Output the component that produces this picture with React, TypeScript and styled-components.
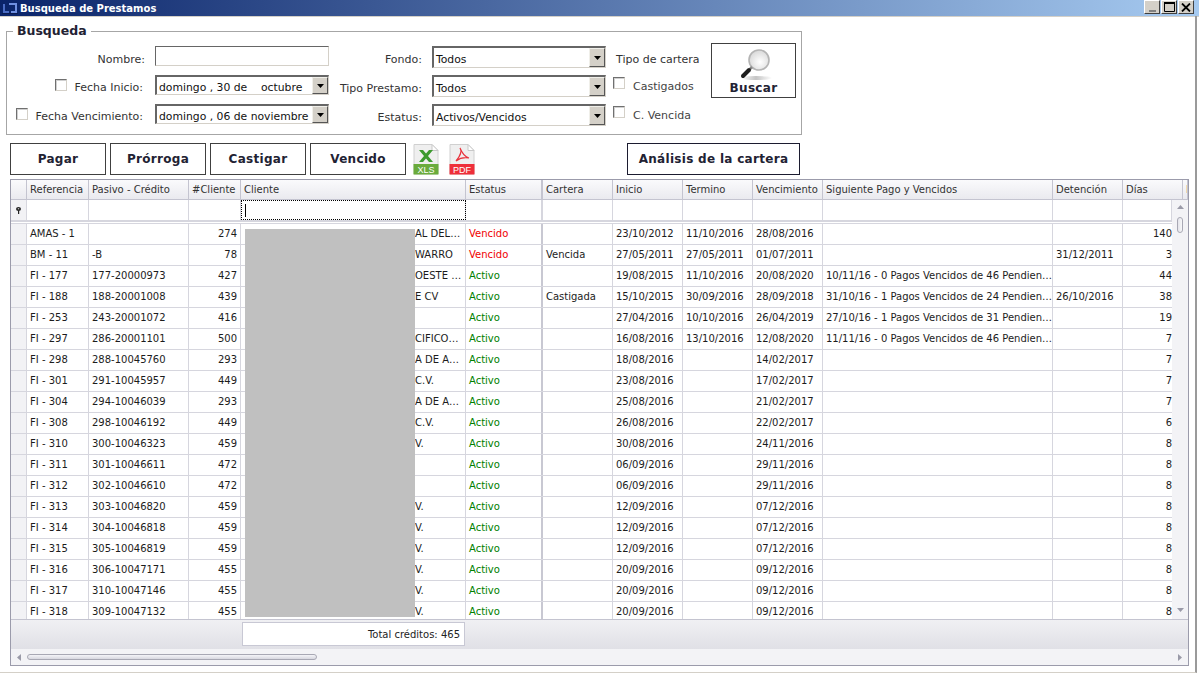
import React from 'react';
import styled, { createGlobalStyle } from 'styled-components';

const HEAD_COLS = '16px 62px 100px 52px 225px 77px 70px 70px 70px 70px 230px 70px 60px 1fr';
const BODY_COLS = '16px 62px 100px 52px 225px 77px 70px 70px 70px 70px 230px 70px 49px';

const headers = [
  '',
  'Referencia',
  'Pasivo - Crédito',
  '#Cliente',
  'Cliente',
  'Estatus',
  'Cartera',
  'Inicio',
  'Termino',
  'Vencimiento',
  'Siguiente Pago y Vencidos',
  'Detención',
  'Días',
  'I',
];

type Row = [string, string, string, string, string, string, string, string, string, string, string, string];

const rows: Row[] = [
  ['AMAS - 1', '', '274', 'AL DEL…', 'Vencido', '', '23/10/2012', '11/10/2016', '28/08/2016', '', '', '140'],
  ['BM - 11', '-B', '78', 'WARRO', 'Vencido', 'Vencida', '27/05/2011', '27/05/2011', '01/07/2011', '', '31/12/2011', '3'],
  ['FI - 177', '177-20000973', '427', 'OESTE …', 'Activo', '', '19/08/2015', '11/10/2016', '20/08/2020', '10/11/16 - 0 Pagos Vencidos de 46 Pendien…', '', '44'],
  ['FI - 188', '188-20001008', '439', 'E CV', 'Activo', 'Castigada', '15/10/2015', '30/09/2016', '28/09/2018', '31/10/16 - 1 Pagos Vencidos de 24 Pendien…', '26/10/2016', '38'],
  ['FI - 253', '243-20001072', '416', '', 'Activo', '', '27/04/2016', '10/10/2016', '26/04/2019', '27/10/16 - 1 Pagos Vencidos de 31 Pendien…', '', '19'],
  ['FI - 297', '286-20001101', '500', 'CIFICO…', 'Activo', '', '16/08/2016', '13/10/2016', '12/08/2020', '11/11/16 - 0 Pagos Vencidos de 46 Pendien…', '', '7'],
  ['FI - 298', '288-10045760', '293', 'A DE A…', 'Activo', '', '18/08/2016', '', '14/02/2017', '', '', '7'],
  ['FI - 301', '291-10045957', '449', 'C.V.', 'Activo', '', '23/08/2016', '', '17/02/2017', '', '', '7'],
  ['FI - 304', '294-10046039', '293', 'A DE A…', 'Activo', '', '25/08/2016', '', '21/02/2017', '', '', '7'],
  ['FI - 308', '298-10046192', '449', 'C.V.', 'Activo', '', '26/08/2016', '', '22/02/2017', '', '', '6'],
  ['FI - 310', '300-10046323', '459', 'V.', 'Activo', '', '30/08/2016', '', '24/11/2016', '', '', '8'],
  ['FI - 311', '301-10046611', '472', '', 'Activo', '', '06/09/2016', '', '29/11/2016', '', '', '8'],
  ['FI - 312', '302-10046610', '472', '', 'Activo', '', '06/09/2016', '', '29/11/2016', '', '', '8'],
  ['FI - 313', '303-10046820', '459', 'V.', 'Activo', '', '12/09/2016', '', '07/12/2016', '', '', '8'],
  ['FI - 314', '304-10046818', '459', 'V.', 'Activo', '', '12/09/2016', '', '07/12/2016', '', '', '8'],
  ['FI - 315', '305-10046819', '459', 'V.', 'Activo', '', '12/09/2016', '', '07/12/2016', '', '', '8'],
  ['FI - 316', '306-10047171', '455', 'V.', 'Activo', '', '20/09/2016', '', '09/12/2016', '', '', '8'],
  ['FI - 317', '310-10047146', '455', 'V.', 'Activo', '', '20/09/2016', '', '09/12/2016', '', '', '8'],
  ['FI - 318', '309-10047132', '455', 'V.', 'Activo', '', '20/09/2016', '', '09/12/2016', '', '', '8'],
];

const ComboArrow: React.FC = () => (
  <svg width="7" height="4" viewBox="0 0 7 4">
    <path d="M0 0h7L3.5 4z" fill="#000" />
  </svg>
);

const Combo: React.FC<{ value: string; tall?: boolean }> = ({ value, tall }) => (
  <ComboBox $tall={tall}>
    <ComboText>{value}</ComboText>
    <ComboButton>
      <ComboArrow />
    </ComboButton>
  </ComboBox>
);

const Check: React.FC<{ label: string }> = ({ label }) => (
  <CheckLabel>
    <CheckBox />
    <span>{label}</span>
  </CheckLabel>
);

const LogoIcon: React.FC = () => (
  <svg width="16" height="13" viewBox="0 0 16 13">
    <path d="M1 2v9h6V9H3V2z" fill="#4a6cc4" />
    <path d="M7 1h8v10H9V9h4V3H7z" fill="#6f90e0" />
    <path d="M0 11h16v1H0z" fill="#0a1a50" />
  </svg>
);

const SearchIcon: React.FC = () => (
  <svg width="50" height="34" viewBox="0 0 50 34">
    <defs>
      <radialGradient id="lens" cx="0.55" cy="0.6" r="0.6">
        <stop offset="0" stopColor="#ffffff" />
        <stop offset="1" stopColor="#d8d8d8" />
      </radialGradient>
      <linearGradient id="shadow" x1="0" x2="1">
        <stop offset="0" stopColor="#ffffff" />
        <stop offset="0.5" stopColor="#c4c4c4" />
        <stop offset="1" stopColor="#ffffff" />
      </linearGradient>
    </defs>
    <ellipse cx="27" cy="31" rx="16" ry="2" fill="url(#shadow)" />
    <circle cx="30" cy="13" r="10" fill="url(#lens)" stroke="#b4b4b4" strokeWidth="1.6" />
    <path d="M23 20l-2 2" stroke="#8a8a8a" strokeWidth="2.5" />
    <path d="M20 23l-6 6" stroke="#1c1c1c" strokeWidth="4" strokeLinecap="round" />
  </svg>
);

const FileIcon: React.FC<{ band: string; label: string; children: React.ReactNode }> = ({ band, label, children }) => (
  <svg width="26" height="31" viewBox="0 0 26 31">
    <path d="M1 0.5h18l6 6v23.5H1z" fill="#efefef" stroke="#d0d0d0" />
    <path d="M19 0.5v6h6z" fill="#fff" stroke="#c8c8c8" />
    <rect x="0.5" y="20" width="25" height="10.5" fill={band} />
    <text x="13" y="28.5" textAnchor="middle" fontFamily="Liberation Sans, sans-serif" fontSize="9" fill="#fff">
      {label}
    </text>
    {children}
  </svg>
);

const PinIcon: React.FC = () => (
  <svg width="5" height="7" viewBox="0 0 5 7">
    <ellipse cx="2.5" cy="2" rx="2.5" ry="2" fill="#222" />
    <circle cx="2.5" cy="1.8" r="0.8" fill="#bbb" />
    <path d="M2 3.5h1.2V7H2z" fill="#222" />
  </svg>
);

const App: React.FC = () => (
  <Window>
    <GlobalStyle />
    <TitleBar>
      <LogoIcon />
      <TitleText>Busqueda de Prestamos</TitleText>
      <WindowButtons>
        <WindowButton>
          <svg width="7" height="2" viewBox="0 0 7 2">
            <path d="M0 0h7v2H0z" fill="#808080" />
          </svg>
        </WindowButton>
        <WindowButton>
          <svg width="11" height="10" viewBox="0 0 11 10">
            <path d="M0.5 1.5h10v8H0.5z" fill="none" stroke="#000" />
            <path d="M0 0h11v2H0z" fill="#000" />
          </svg>
        </WindowButton>
        <WindowButton>
          <svg width="10" height="9" viewBox="0 0 10 9">
            <path d="M1 0.5l8 8M9 0.5l-8 8" stroke="#000" strokeWidth="1.8" />
          </svg>
        </WindowButton>
      </WindowButtons>
    </TitleBar>

    <Content>
      <SearchGroup>
        <SearchLegend>Busqueda</SearchLegend>
        <SearchForm>
          <FieldLabel>Nombre:</FieldLabel>
          <TextInput />
          <FieldLabel>Fondo:</FieldLabel>
          <Combo value="Todos" tall />
          <CarteraTitle>Tipo de cartera</CarteraTitle>
          <SearchButton>
            <SearchIcon />
            Buscar
          </SearchButton>

          <DateLabel>
            <CheckBox />
            <span>Fecha Inicio:</span>
          </DateLabel>
          <Combo value="domingo , 30 de    octubre" />
          <FieldLabel>Tipo Prestamo:</FieldLabel>
          <Combo value="Todos" tall />
          <Check label="Castigados" />

          <DateLabel>
            <CheckBox />
            <span>Fecha Vencimiento:</span>
          </DateLabel>
          <Combo value="domingo , 06 de noviembre" />
          <FieldLabel>Estatus:</FieldLabel>
          <Combo value="Activos/Vencidos" tall />
          <Check label="C. Vencida" />
        </SearchForm>
      </SearchGroup>

      <Toolbar>
        <ActionButton>Pagar</ActionButton>
        <ActionButton>Prórroga</ActionButton>
        <ActionButton>Castigar</ActionButton>
        <ActionButton>Vencido</ActionButton>
        <ExportIcons>
          <FileIcon band="#6aab3c" label="XLS">
            <path d="M6 6h4l3 3.5L16 6h4l-5 6 5 6h-4l-3-3.5L10 18H6l5-6z" fill="#3c9a2e" />
          </FileIcon>
          <FileIcon band="#ee2f3a" label="PDF">
            <path d="M11 4c2 3 1 7-4 13 4-3 8-4 13-3-4-1-7-5-9-10z" fill="none" stroke="#e8323c" strokeWidth="1.2" />
          </FileIcon>
        </ExportIcons>
        <AnalysisButton>Análisis de la cartera</AnalysisButton>
      </Toolbar>

      <GridFrame>
        <HeaderRow>
          {headers.map((title, i) => (
            <HeaderCell key={i} $thick={i === 5}>
              {title}
            </HeaderCell>
          ))}
        </HeaderRow>

        <GridMiddle>
          <Viewport>
            <FilterRow>
              {BODY_COLS.split(' ').map((_, i) => (
                <FilterCell key={i} $indicator={i === 0} $focused={i === 4} $thick={i === 5}>
                  {i === 0 && <PinIcon />}
                  {i === 4 && <Caret />}
                </FilterCell>
              ))}
            </FilterRow>
            <FilterDivider />
            {rows.map((row) => (
              <DataRow key={row[0]}>
                <IndicatorCell />
                <DataCell>{row[0]}</DataCell>
                <DataCell>{row[1]}</DataCell>
                <DataCell $right>{row[2]}</DataCell>
                <ClientCell>{row[3]}</ClientCell>
                <StatusCell $overdue={row[4] === 'Vencido'}>{row[4]}</StatusCell>
                <DataCell>{row[5]}</DataCell>
                <DataCell>{row[6]}</DataCell>
                <DataCell>{row[7]}</DataCell>
                <DataCell>{row[8]}</DataCell>
                <DataCell>{row[9]}</DataCell>
                <DataCell>{row[10]}</DataCell>
                <DaysCell>{row[11]}</DaysCell>
              </DataRow>
            ))}
            <Redaction />
          </Viewport>
          <VScroll>
            <svg width="7" height="4" viewBox="0 0 7 4">
              <path d="M3.5 0L7 4H0z" fill="#9a9aa8" />
            </svg>
            <VThumb />
            <VSpacer />
            <svg width="7" height="4" viewBox="0 0 7 4">
              <path d="M0 0h7L3.5 4z" fill="#9a9aa8" />
            </svg>
          </VScroll>
        </GridMiddle>

        <FooterRow>
          <TotalBox>Total créditos: 465</TotalBox>
        </FooterRow>

        <HScroll>
          <svg width="4" height="7" viewBox="0 0 4 7">
            <path d="M4 0v7L0 3.5z" fill="#9a9aa8" />
          </svg>
          <HThumb />
          <svg width="4" height="7" viewBox="0 0 4 7">
            <path d="M0 0v7l4-3.5z" fill="#9a9aa8" />
          </svg>
        </HScroll>
      </GridFrame>
    </Content>
  </Window>
);

const GlobalStyle = createGlobalStyle`
  html, body {
    margin: 0;
    padding: 0;
    background: #fff;
    overflow: hidden;
  }
`;

const Window = styled.div`
  width: 1199px;
  height: 673px;
  display: flex;
  flex-direction: column;
  font-family: 'DejaVu Sans', sans-serif;
  font-size: 11px;
  color: #222;
`;

const TitleBar = styled.div`
  height: 16px;
  flex: none;
  display: flex;
  align-items: center;
  padding: 0 5px 0 2px;
  background: linear-gradient(90deg, #0a246a 0%, #a6caf0 100%);
  box-shadow: 0 1px 0 #d4d0c8;
`;

const TitleText = styled.span`
  margin-left: 2px;
  color: #fff;
  font-family: 'DejaVu Sans', sans-serif;
  font-weight: bold;
  font-size: 10px;
`;

const WindowButtons = styled.div`
  margin-left: auto;
  display: flex;
  gap: 1px;
  align-self: flex-start;
`;

const WindowButton = styled.div`
  width: 16px;
  height: 14px;
  box-sizing: border-box;
  display: flex;
  align-items: center;
  justify-content: center;
  background: #d4d0c8;
  border: 1px solid;
  border-color: #fff #404040 #404040 #fff;
  &:first-child svg {
    margin-top: 7px;
  }
`;

const Content = styled.div`
  flex: 1;
  width: 1197px;
  box-sizing: border-box;
  padding: 12px 7px 6px 6px;
  border-right: 2px solid #9a9a9a;
  border-bottom: 1px solid #d4d0c8;
  display: flex;
  flex-direction: column;
`;

const SearchGroup = styled.fieldset`
  width: 796px;
  height: 107px;
  box-sizing: border-box;
  margin: 0;
  padding: 0;
  border: 1px solid #a6a6a6;
`;

const SearchLegend = styled.legend`
  margin-left: 6px;
  padding: 0 4px;
  font-weight: bold;
  font-size: 12.5px;
  line-height: 6px;
  color: #222233;
`;

const SearchForm = styled.div`
  display: grid;
  grid-template-columns: 148px 174px 103px 174px 105px 85px;
  grid-template-rows: 29px 29px 29px;
  margin-top: 12px;
  align-items: start;
`;

const FieldLabel = styled.label`
  padding: 7px 10px 0 0;
  text-align: right;
  white-space: nowrap;
  color: #333;
`;

const DateLabel = styled(FieldLabel)`
  display: flex;
  justify-content: flex-end;
  align-items: flex-start;
  gap: 7px;
  padding-right: 12px;
  padding-top: 4px;
  span {
    padding-top: 2px;
  }
`;

const CheckBox = styled.span`
  width: 12px;
  height: 12px;
  box-sizing: border-box;
  display: block;
  flex: none;
  background: #fff;
  border: 1px solid;
  border-color: #707070 #d4d0c8 #d4d0c8 #707070;
  box-shadow: inset 1px 1px 0 #d0d0d0;
`;

const TextInput = styled.div`
  height: 20px;
  box-sizing: border-box;
  background: #fff;
  border: 1px solid;
  border-color: #666 #d4d0c8 #d4d0c8 #666;
`;

const ComboBox = styled.div<{ $tall?: boolean }>`
  height: ${(p) => (p.$tall ? '22px' : '20px')};
  box-sizing: border-box;
  display: flex;
  align-items: center;
  background: #fff;
  border: 1px solid;
  border-color: #666 #d4d0c8 #d4d0c8 #666;
  border-width: 2px 1px 1px 2px;
`;

const ComboText = styled.span`
  flex: 1;
  padding: 3px 0 0 2px;
  font-size: 10.8px;
  white-space: pre;
  overflow: hidden;
  color: #111;
`;

const ComboButton = styled.span`
  width: 16px;
  height: 100%;
  box-sizing: border-box;
  flex: none;
  display: flex;
  align-items: center;
  justify-content: center;
  background: #d4d0c8;
  border: 1px solid;
  border-color: #f0efe9 #555 #555 #f0efe9;
`;

const CarteraTitle = styled.div`
  margin-left: 10px;
  padding-top: 7px;
  color: #333;
`;

const CheckLabel = styled.label`
  margin-left: 7px;
  display: flex;
  align-items: flex-start;
  gap: 8px;
  padding-top: 2px;
  color: #444;
  span:last-child {
    padding-top: 3px;
  }
`;

const SearchButton = styled.div`
  grid-column: 6;
  grid-row: 1 / span 2;
  height: 55px;
  margin-top: -3px;
  box-sizing: border-box;
  display: flex;
  flex-direction: column;
  align-items: center;
  justify-content: flex-end;
  padding-bottom: 2px;
  border: 1px solid #404040;
  background: #fff;
  font-weight: bold;
  font-size: 12px;
  letter-spacing: 0.3px;
  color: #222233;
`;

const Toolbar = styled.div`
  width: 790px;
  margin: 8px 0 4px 4px;
  display: flex;
  align-items: center;
  gap: 4px;
`;

const ActionButton = styled.div`
  width: 96px;
  height: 32px;
  box-sizing: border-box;
  display: flex;
  align-items: center;
  justify-content: center;
  border: 1px solid #404040;
  background: #fff;
  font-weight: bold;
  font-size: 12px;
  letter-spacing: 0.3px;
  color: #222233;
`;

const ExportIcons = styled.div`
  margin-left: 3px;
  display: flex;
  gap: 10px;
`;

const AnalysisButton = styled(ActionButton)`
  width: 173px;
  margin-left: auto;
  border-color: #1c1c30;
`;

const GridFrame = styled.div`
  width: 1179px;
  height: 487px;
  margin-left: 4px;
  box-sizing: border-box;
  border: 1px solid #9b9bab;
  display: flex;
  flex-direction: column;
  font-size: 10px;
  overflow: hidden;
`;

const HeaderRow = styled.div`
  height: 20px;
  flex: none;
  box-sizing: border-box;
  display: grid;
  grid-template-columns: ${HEAD_COLS};
  border-bottom: 1px solid #c4c4d0;
  background: linear-gradient(#fafafc, #eaeaef);
`;

const HeaderCell = styled.div<{ $thick?: boolean }>`
  display: flex;
  align-items: center;
  padding-left: 3px;
  box-sizing: border-box;
  white-space: nowrap;
  overflow: hidden;
  color: #333;
  border-right: ${(p) => (p.$thick ? '2px' : '1px')} solid #c4c4d0;
`;

const GridMiddle = styled.div`
  height: 419px;
  flex: none;
  display: flex;
`;

const Viewport = styled.div`
  flex: 1;
  min-width: 0;
  position: relative;
  overflow: hidden;
`;

const FilterRow = styled.div`
  height: 20px;
  display: grid;
  grid-template-columns: ${BODY_COLS};
`;

const FilterCell = styled.div<{ $indicator?: boolean; $focused?: boolean; $thick?: boolean }>`
  box-sizing: border-box;
  display: flex;
  align-items: center;
  justify-content: ${(p) => (p.$indicator ? 'center' : 'flex-start')};
  background: ${(p) => (p.$indicator ? '#f2f2f5' : '#fff')};
  border-right: ${(p) => (p.$thick ? '2px' : '1px')} solid #d6d6de;
  ${(p) => p.$focused && 'outline: 1px dotted #000; outline-offset: -1px; padding-left: 4px;'}
`;

const Caret = styled.div`
  width: 1px;
  height: 13px;
  background: #000;
`;

const FilterDivider = styled.div`
  height: 4px;
  box-sizing: border-box;
  border-top: 2px solid #d6d6de;
  border-bottom: 1px solid #d6d6de;
  background: #fff;
`;

const DataRow = styled.div`
  height: 21px;
  box-sizing: border-box;
  display: grid;
  grid-template-columns: ${BODY_COLS};
  border-bottom: 1px solid #d6d6de;
`;

const IndicatorCell = styled.div`
  background: #f2f2f5;
  border-right: 1px solid #d6d6de;
`;

const DataCell = styled.div<{ $right?: boolean }>`
  display: flex;
  align-items: center;
  justify-content: ${(p) => (p.$right ? 'flex-end' : 'flex-start')};
  box-sizing: border-box;
  padding: 0 3px 1px;
  white-space: nowrap;
  overflow: hidden;
  color: #1c1c1c;
  border-right: 1px solid #d6d6de;
`;

const ClientCell = styled(DataCell)`
  padding-left: 174px;
`;

const StatusCell = styled(DataCell)<{ $overdue?: boolean }>`
  color: ${(p) => (p.$overdue ? '#f00000' : '#008000')};
  border-right: 2px solid #c8c8d2;
`;

const DaysCell = styled(DataCell)`
  justify-content: flex-end;
  padding: 0 0 1px;
  border-right: none;
`;

const Redaction = styled.div`
  position: absolute;
  left: 234px;
  top: 29px;
  width: 170px;
  bottom: 2px;
  background: #c0c0c0;
`;

const VScroll = styled.div`
  width: 16px;
  flex: none;
  display: flex;
  flex-direction: column;
  align-items: center;
  padding: 5px 0 7px;
  box-sizing: border-box;
  background: #f3f3f6;
`;

const VThumb = styled.div`
  width: 6px;
  height: 16px;
  margin-top: 8px;
  box-sizing: border-box;
  border: 1px solid #a8a8b4;
  border-radius: 3px;
  background: linear-gradient(90deg, #e4e4ea, #f8f8fa);
`;

const VSpacer = styled.div`
  flex: 1;
`;

const FooterRow = styled.div`
  height: 30px;
  flex: none;
  box-sizing: border-box;
  padding: 2px 0 3px 231px;
  border-top: 1px solid #c4c4d0;
  background: linear-gradient(#f0f0f3, #e0e0e6);
`;

const TotalBox = styled.div`
  width: 223px;
  height: 100%;
  box-sizing: border-box;
  display: flex;
  align-items: center;
  justify-content: flex-end;
  padding: 1px 4px 0 0;
  background: #fff;
  border: 1px solid #c8c8d4;
  color: #222;
`;

const HScroll = styled.div`
  flex: 1;
  display: flex;
  align-items: center;
  padding: 0 6px;
  background: #f3f3f6;
`;

const HThumb = styled.div`
  width: 290px;
  height: 6px;
  margin-left: 6px;
  margin-right: auto;
  box-sizing: border-box;
  border: 1px solid #a8a8b4;
  border-radius: 3px;
  background: linear-gradient(#f4f4f8, #d8d8e0);
`;

export default App;
